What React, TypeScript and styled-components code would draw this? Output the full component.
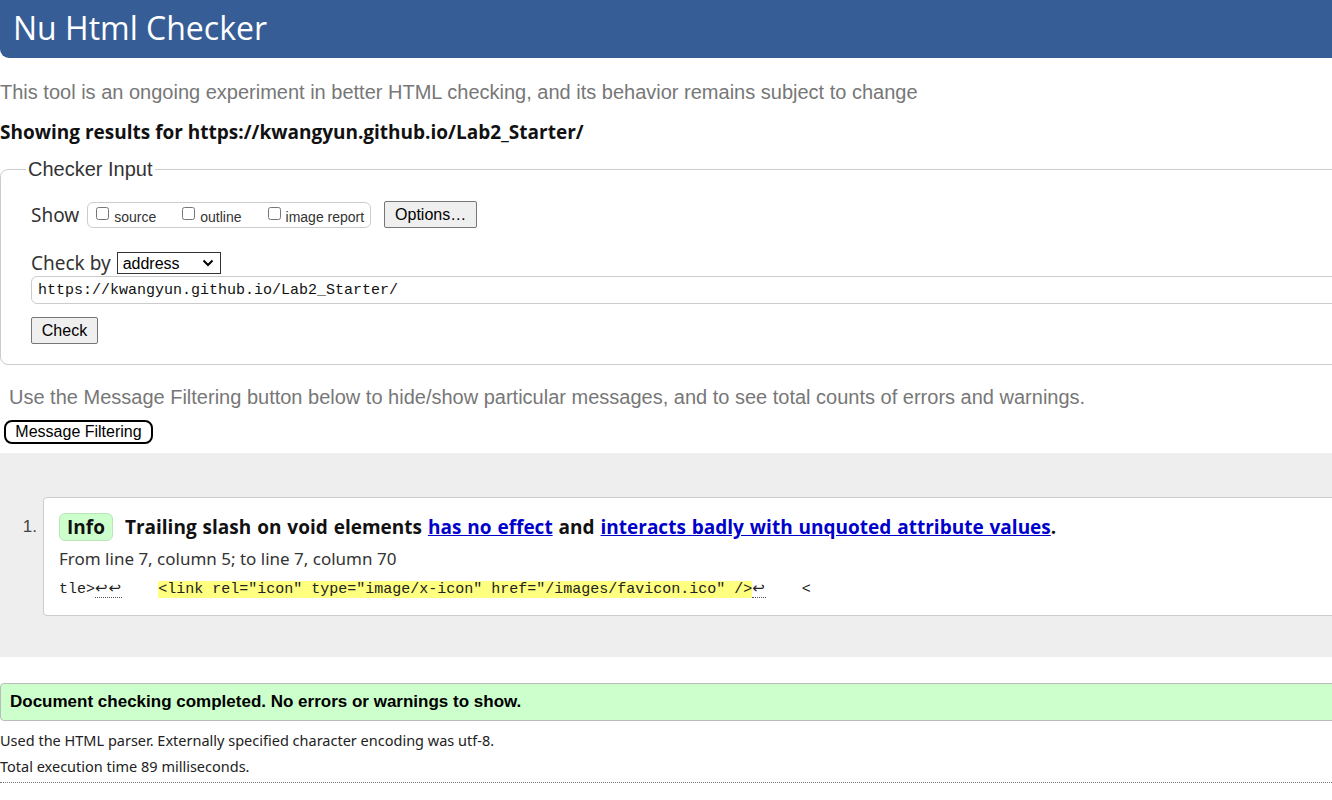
import React from "react";
import styled, { createGlobalStyle } from "styled-components";

const GlobalStyle = createGlobalStyle`
  html, body {
    margin: 0;
    padding: 0;
    background: #fff;
    overflow: hidden;
  }
  body {
    font-family: "Liberation Sans", Arial, sans-serif;
  }
`;

const Page = styled.div`
  width: 1370px;
  display: flex;
  flex-direction: column;
`;

const Header = styled.h1`
  margin: 0;
  height: 58px;
  box-sizing: border-box;
  padding: 6px 0 0 13px;
  background: #365d95;
  color: #fff;
  font-family: "Open Sans", "Noto Sans", sans-serif;
  font-weight: 400;
  font-size: 32px;
  line-height: 44px;
  border-bottom-left-radius: 9px;
`;

const Intro = styled.p`
  margin: 20px 0 0 0;
  font-family: "Liberation Sans", Arial, sans-serif;
  font-size: 20px;
  line-height: 28px;
  color: #777;
`;

const ResultsFor = styled.h2`
  margin: 12px 0 0 0;
  font-family: "Open Sans", "Noto Sans", sans-serif;
  font-weight: 700;
  font-size: 19px;
  line-height: 28px;
  color: #111;
`;

const Fieldset = styled.fieldset`
  margin: 11px 0 0 0;
  padding: 0 0 20px 30px;
  border: 1px solid #ccc;
  border-radius: 8px;
  display: flex;
  flex-direction: column;
  min-width: 0;
`;

const Legend = styled.legend`
  margin-left: -5px;
  padding: 0 2px;
  font-family: "Liberation Sans", Arial, sans-serif;
  font-size: 20px;
  line-height: 24px;
  color: #333;
`;

const Row = styled.div<{ $mt?: number }>`
  display: flex;
  align-items: center;
  margin-top: ${(p) => p.$mt ?? 0}px;
`;

const RowLabel = styled.span<{ $gap?: number }>`
  font-family: "Noto Sans", "Open Sans", sans-serif;
  font-size: 19px;
  color: #333;
  margin-right: ${(p) => p.$gap ?? 8}px;
`;

const ShowBox = styled.div`
  display: flex;
  align-items: center;
  height: 26px;
  box-sizing: border-box;
  padding: 0 6px 0 7px;
  border: 1px solid #ccc;
  border-radius: 6px;
  gap: 25px;
`;

const CheckLabel = styled.label`
  display: flex;
  align-items: center;
  font-family: "Liberation Sans", Arial, sans-serif;
  font-size: 14px;
  color: #333;
  padding-top: 4px;
`;

const CheckInput = styled.input`
  margin: -6px 5px 0 1px;
  width: 13px;
  height: 13px;
`;

const Button = styled.button`
  font-family: "Liberation Sans", Arial, sans-serif;
  font-size: 16px;
  color: #000;
  background: #efefef;
  border: 1px solid #767676;
  border-radius: 2px;
  height: 27px;
  padding: 0 9px;
`;

const OptionsButton = styled(Button)`
  margin-left: 13px;
  width: 93px;
  padding: 0;
`;

const SelectWrap = styled.div`
  position: relative;
  display: inline-flex;
`;

const Select = styled.select`
  appearance: none;
  width: 104px;
  height: 22px;
  box-sizing: border-box;
  border: 1px solid #333;
  border-radius: 0;
  background: #fff;
  font-family: "Liberation Sans", Arial, sans-serif;
  font-size: 16px;
  padding: 0 0 0 5px;
  color: #000;
`;

const Chevron = styled.svg`
  position: absolute;
  right: 7px;
  top: 7px;
  pointer-events: none;
`;

const UrlInput = styled.input`
  margin-top: 0;
  height: 28px;
  box-sizing: border-box;
  border: 1px solid #ccc;
  border-radius: 6px;
  padding: 0 6px;
  font-family: "Liberation Mono", "DejaVu Sans Mono", monospace;
  font-size: 15px;
  color: #111;
  width: 100%;
`;

const CheckButton = styled(Button)`
  margin-top: 13px;
  align-self: flex-start;
  width: 67px;
  padding: 0;
`;

const FilterIntro = styled.p`
  margin: 19px 0 0 9px;
  font-family: "Liberation Sans", Arial, sans-serif;
  font-size: 20px;
  line-height: 26px;
  color: #777;
`;

const FilterButton = styled.button`
  margin: 10px 0 0 4px;
  align-self: flex-start;
  height: 24px;
  width: 149px;
  box-sizing: border-box;
  border: 2px solid #000;
  border-radius: 8px;
  background: #fff;
  font-family: "Liberation Sans", Arial, sans-serif;
  font-size: 16px;
  color: #000;
  padding: 0;
`;

const Results = styled.ol`
  margin: 9px 0 0 0;
  padding: 44px 0 41px 0;
  background: #eee;
  list-style: none;
  display: flex;
  flex-direction: column;
`;

const Item = styled.li`
  display: flex;
  align-items: flex-start;
`;

const ItemNumber = styled.span`
  width: 43px;
  box-sizing: border-box;
  padding: 20px 6px 0 0;
  text-align: right;
  font-family: "Liberation Sans", Arial, sans-serif;
  font-size: 17px;
  color: #444;
`;

const Card = styled.div`
  flex: 1;
  background: #fff;
  border: 1px solid #ccc;
  border-radius: 4px;
  padding: 15px 0 15px 15px;
  display: flex;
  flex-direction: column;
`;

const Message = styled.p`
  margin: 0;
  display: flex;
  align-items: center;
  font-family: "Open Sans", "Noto Sans", sans-serif;
  font-weight: 700;
  font-size: 19px;
  color: #111;
`;

const Badge = styled.span`
  display: inline-flex;
  align-items: center;
  height: 26px;
  padding: 0 7px;
  margin-right: 12px;
  background: #ccffcc;
  border: 1px solid #b8e6b8;
  border-radius: 6px;
  font-weight: 700;
  font-size: 19px;
  color: #111;
`;

const MsgText = styled.span`
  white-space: pre;
  word-spacing: 1px;
`;

const Link = styled.a`
  color: #0000cc;
  text-decoration: underline;
`;

const Location = styled.p`
  margin: 6px 0 0 0;
  font-family: "Noto Sans", "Open Sans", sans-serif;
  font-size: 17px;
  line-height: 24px;
  color: #333;
`;

const Extract = styled.p`
  margin: 7px 0 0 0;
  font-family: "Liberation Mono", "DejaVu Sans Mono", monospace;
  font-size: 15px;
  line-height: 20px;
  color: #222;
  white-space: pre;
`;

const Mark = styled.mark`
  background: #ffff80;
  color: #222;
`;

const Lf = styled.span`
  font-family: "DejaVu Sans", sans-serif;
  font-size: 15px;
  letter-spacing: 1px;
  border-bottom: 1px dotted #555;
`;

const Success = styled.p`
  margin: 26px 0 0 0;
  height: 38px;
  box-sizing: border-box;
  padding: 0 0 0 9px;
  display: flex;
  align-items: center;
  background: #ccffcc;
  border: 1px solid #bbb;
  border-radius: 4px;
  font-family: "Liberation Sans", Arial, sans-serif;
  font-weight: 700;
  font-size: 17px;
  color: #000;
`;

const Stat = styled.p<{ $mt: number }>`
  margin: ${(p) => p.$mt}px 0 0 0;
  font-family: "Noto Sans", "Open Sans", sans-serif;
  font-size: 14.5px;
  line-height: 20px;
  color: #222;
`;

const Rule = styled.hr`
  margin: 6px 0 0 0;
  border: 0;
  border-top: 1px dotted #777;
`;

export default function App() {
  return (
    <>
      <GlobalStyle />
      <Page>
        <Header>Nu Html Checker</Header>
        <Intro>
          This tool is an ongoing experiment in better HTML checking, and its behavior remains subject to change
        </Intro>
        <ResultsFor>Showing results for https://kwangyun.github.io/Lab2_Starter/</ResultsFor>
        <Fieldset>
          <Legend>Checker Input</Legend>
          <Row $mt={20}>
            <RowLabel>Show</RowLabel>
            <ShowBox>
              <CheckLabel>
                <CheckInput type="checkbox" />
                source
              </CheckLabel>
              <CheckLabel>
                <CheckInput type="checkbox" />
                outline
              </CheckLabel>
              <CheckLabel>
                <CheckInput type="checkbox" />
                image report
              </CheckLabel>
            </ShowBox>
            <OptionsButton>Options…</OptionsButton>
          </Row>
          <Row $mt={22}>
            <RowLabel $gap={6}>Check by</RowLabel>
            <SelectWrap>
              <Select defaultValue="address">
                <option value="address">address</option>
                <option value="file">file upload</option>
                <option value="text">text input</option>
              </Select>
              <Chevron width="12" height="8" viewBox="0 0 12 8">
                <path d="M1.5 1.5 L6 6 L10.5 1.5" fill="none" stroke="#000" strokeWidth="2" />
              </Chevron>
            </SelectWrap>
          </Row>
          <UrlInput defaultValue="https://kwangyun.github.io/Lab2_Starter/" />
          <CheckButton>Check</CheckButton>
        </Fieldset>
        <FilterIntro>
          Use the Message Filtering button below to hide/show particular messages, and to see total counts of errors and warnings.
        </FilterIntro>
        <FilterButton>Message Filtering</FilterButton>
        <Results>
          <Item>
            <ItemNumber>1.</ItemNumber>
            <Card>
              <Message>
                <Badge>Info</Badge>
                <MsgText>
                  Trailing slash on void elements <Link href="#">has no effect</Link> and{" "}
                  <Link href="#">interacts badly with unquoted attribute values</Link>.
                </MsgText>
              </Message>
              <Location>From line 7, column 5; to line 7, column 70</Location>
              <Extract>
                tle&gt;<Lf>↩↩</Lf>{"    "}
                <Mark>{'<link rel="icon" type="image/x-icon" href="/images/favicon.ico" />'}</Mark>
                <Lf>↩</Lf>{"    <"}
              </Extract>
            </Card>
          </Item>
        </Results>
        <Success>Document checking completed. No errors or warnings to show.</Success>
        <Stat $mt={9}>Used the HTML parser. Externally specified character encoding was utf-8.</Stat>
        <Stat $mt={6}>Total execution time 89 milliseconds.</Stat>
        <Rule />
      </Page>
    </>
  );
}
